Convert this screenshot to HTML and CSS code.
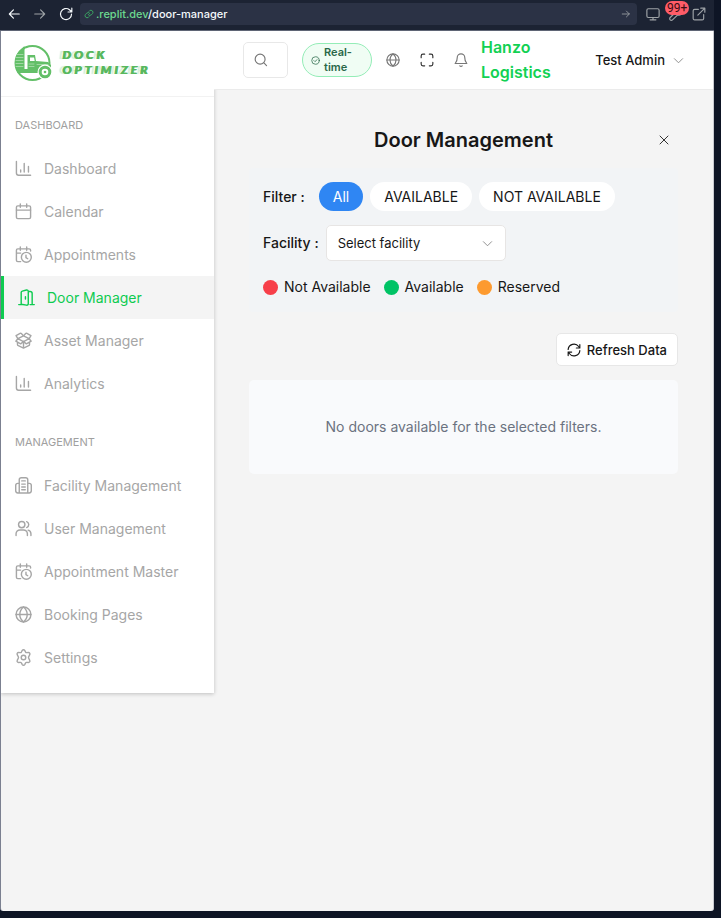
FILE: index.html
```html
<!DOCTYPE html>
<html lang="en">
<head>
<meta charset="utf-8">
<meta name="viewport" content="width=device-width, initial-scale=1">
<title>Door Manager</title>
<link rel="stylesheet" href="styles.css">
</head>
<body>
<svg class="defs" aria-hidden="true">
  <symbol id="bars" viewBox="0 0 24 24"><path d="M2 2v16.500a3 3 0 0 0 3 3h17M8 17v-3M13 17V5M19 17V9"/></symbol>
  <symbol id="calendar" viewBox="0 0 24 24"><rect x="2" y="4" width="20" height="18" rx="2"/><path d="M7.500 1.500V6M16.500 1.500V6M2 10h20"/></symbol>
  <symbol id="cal-clock" viewBox="0 0 24 24"><path d="M22 7V6a2 2 0 0 0-2-2H4a2 2 0 0 0-2 2v14a2 2 0 0 0 2 2h4M7.500 1.500V6M16.500 1.500V6M2 10h6"/><circle cx="16" cy="16" r="7"/><path d="M15.500 13v3.500l2.500 1.500"/></symbol>
  <symbol id="door" viewBox="0 0 24 24"><path d="M1 22h6M17 22h6M4.500 22V5a2 2 0 0 1 1.500-2l6-1.600a2 2 0 0 1 2.500 2V21a2 2 0 0 1-2.500 1.800L4.500 21.500M14.500 3.500H17a3 3 0 0 1 3 3V22M10.500 11v3"/></symbol>
  <symbol id="box" viewBox="0 0 24 24"><path d="M12 5.500 4 9.500l8 4 8-4-8-4ZM12 5.500 9 2.200a1.500 1.500 0 0 0-1.800-.3L1.500 5 4 9.500M12 5.500l3-3.300a1.500 1.500 0 0 1 1.800-.3L22.500 5 20 9.500M4 9.500 1.200 13l6.800 3.700 4-3.200 4 3.200 6.800-3.700L20 9.500M3.500 14.500v3a2 2 0 0 0 1.200 1.800L12 22.800l7.300-3.500a2 2 0 0 0 1.200-1.800v-3M12 13.500v9"/></symbol>
  <symbol id="building" viewBox="0 0 24 24"><path d="M6 22.500V4a3 3 0 0 1 3-3h6a3 3 0 0 1 3 3v18.500M6 9H4a3 3 0 0 0-3 3v7.500a3 3 0 0 0 3 3h16a3 3 0 0 0 3-3V12a3 3 0 0 0-3-3h-2M9.500 5.500h5M9.500 10h5M9.500 14h5M9.500 18h5"/></symbol>
  <symbol id="users" viewBox="0 0 24 24"><circle cx="9.500" cy="6.500" r="4.500"/><path d="M1.500 22v-2.500A5.500 5.500 0 0 1 7 14h5a5.500 5.500 0 0 1 5.500 5.500V22M16.500 2.300a4.500 4.500 0 0 1 0 8.400M18.500 14.300a5.500 5.500 0 0 1 4 5.200V22"/></symbol>
  <symbol id="globe" viewBox="0 0 24 24"><circle cx="12" cy="12" r="10.500"/><path d="M1.500 12h21M12 1.500c-7 6-7 15 0 21M12 1.500c7 6 7 15 0 21"/></symbol>
  <symbol id="gear" viewBox="0 0 24 24"><path d="M9.500 3.200 10.300 2a2 2 0 0 1 3.400 0l1.300 2.300a1.500 1.500 0 0 0 1.400.8l2.700-.1a2 2 0 0 1 1.700 3l-1.400 2.900a2 2 0 0 0 0 2.200l1.400 2.900a2 2 0 0 1-1.700 3l-2.700-.1a1.500 1.500 0 0 0-1.400.8L13.700 22a2 2 0 0 1-3.400 0L9 19.700a1.500 1.500 0 0 0-1.400-.8l-2.700.1a2 2 0 0 1-1.700-3l1.400-2.900a2 2 0 0 0 0-2.200L3.200 8a2 2 0 0 1 1.700-3l2.700.1A1.500 1.500 0 0 0 9 4.300Z"/><circle cx="12" cy="12" r="3.200"/></symbol>
  <symbol id="search" viewBox="0 0 24 24"><circle cx="10.500" cy="10.500" r="8.500"/><path d="m17 17 4.500 4.500"/></symbol>
  <symbol id="check" viewBox="0 0 24 24"><circle cx="12" cy="12" r="10"/><path d="m7.500 12 3 3 6-5.500"/></symbol>
  <symbol id="expand" viewBox="0 0 24 24"><path d="M8 2H5a3 3 0 0 0-3 3v3M22 8V5a3 3 0 0 0-3-3h-3M2 16v3a3 3 0 0 0 3 3h3M16 22h3a3 3 0 0 0 3-3v-3"/></symbol>
  <symbol id="bell" viewBox="0 0 24 24"><path d="M5.500 8a6.500 6.500 0 0 1 13 0c0 7 3 8 3.500 10H2c.5-2 3.500-3 3.500-10M10 22a2.500 2.500 0 0 0 4 0"/></symbol>
  <symbol id="chevron" viewBox="0 0 24 24"><path d="m3 8 9 9 9-9"/></symbol>
  <symbol id="close" viewBox="0 0 24 24"><path d="m4 4 16 16M20 4 4 20"/></symbol>
  <symbol id="refresh" viewBox="0 0 24 24"><path d="M2 11a10 10 0 0 1 18-5l2 2.500M22 2.500v6h-6M22 13a10 10 0 0 1-18 5l-2-2.500M2 21.500v-6h6"/></symbol>
  <symbol id="arrow-left" viewBox="0 0 24 24"><path d="M21 12H4M11 5l-7 7 7 7"/></symbol>
  <symbol id="arrow-right" viewBox="0 0 24 24"><path d="M3 12h17M13 5l7 7-7 7"/></symbol>
  <symbol id="reload" viewBox="0 0 24 24"><path d="M21.500 12A9.500 9.500 0 1 1 18 4.800L22 8.500M22 2v6.500h-6.500"/></symbol>
  <symbol id="link" viewBox="0 0 24 24"><path d="M10 13.500a5 5 0 0 0 7.500.5l3-3a5 5 0 0 0-7-7L12 5.500M14 10.500a5 5 0 0 0-7.500-.5l-3 3a5 5 0 0 0 7 7l1.500-1.500"/></symbol>
  <symbol id="monitor" viewBox="0 0 24 24"><rect x="1.500" y="3" width="21" height="15" rx="2.500"/><path d="M12 18v4M7 22h10"/></symbol>
  <symbol id="wrench" viewBox="0 0 24 24"><path d="M14.500 6.500a5 5 0 0 1 6-4L17.500 6l1 3 3 .5L23 7a6 6 0 0 1-8 6.500L6 22a2.500 2.500 0 0 1-4-4l9-8.500a6 6 0 0 1 3.500-3"/></symbol>
  <symbol id="external" viewBox="0 0 24 24"><path d="M11 4H4.500A2.500 2.500 0 0 0 2 6.500v13A2.500 2.500 0 0 0 4.500 22h13a2.500 2.500 0 0 0 2.500-2.500V13M15 2h7v7M22 2 10 14"/></symbol>
</svg>

<div class="browser">
  <div class="toolbar">
    <button class="tool" aria-label="Back"><svg><use href="#arrow-left"/></svg></button>
    <button class="tool dim" aria-label="Forward"><svg><use href="#arrow-right"/></svg></button>
    <button class="tool" aria-label="Reload"><svg><use href="#reload"/></svg></button>
    <div class="address">
      <svg class="link-icon"><use href="#link"/></svg>
      <span class="url"><span class="host">.replit.dev</span>/door-manager</span>
      <button class="go" aria-label="Go"><svg><use href="#arrow-right"/></svg></button>
    </div>
    <div class="tools">
      <button class="tool dim" aria-label="Devices"><svg><use href="#monitor"/></svg></button>
      <button class="tool dim" aria-label="Developer tools"><svg><use href="#wrench"/></svg><span class="count">99+</span></button>
      <button class="tool dim" aria-label="Open in new tab"><svg><use href="#external"/></svg></button>
    </div>
  </div>

  <div class="app">
    <aside class="sidebar">
      <a class="logo" href="#">
        <svg class="logo-mark" viewBox="0 0 38 38" aria-hidden="true">
          <circle cx="18.500" cy="18" r="17" fill="none" stroke="#63bf68" stroke-width="2"/>
          <path d="M2 11 5 6l5.500-5v27H4L1 21Z" fill="#63bf68"/>
          <path d="M3 9.500h6M2 12.500h7M2 15.500h7M2 18.500h7M2 21.500h7" stroke="#b9e2bb" stroke-width=".7"/>
          <path d="M11.700 4v20" stroke="#fff" stroke-width="1"/>
          <path d="M13.500 10h7.500l1 6 12 1 3 3v5H26l-2 3H4l-2-4h11.500Z" fill="#63bf68"/>
          <path d="M16 12.500h4l.7 3.500H16Z" fill="#fff"/>
          <path d="M15 19h5M15 21.500h5M23 19.500h11" stroke="#b9e2bb" stroke-width=".7"/>
          <circle cx="31" cy="27" r="7.500" fill="#fff"/>
          <circle cx="31" cy="27" r="4.800" fill="none" stroke="#63bf68" stroke-width="3"/>
          <circle cx="31" cy="27" r="1.300" fill="#63bf68"/>
        </svg>
        <span class="logo-text"><span>DOCK</span><span>OPTIMIZER</span></span>
      </a>
      <nav class="nav" aria-label="Main">
        <h2>DASHBOARD</h2>
        <a href="#"><svg><use href="#bars"/></svg>Dashboard</a>
        <a href="#"><svg><use href="#calendar"/></svg>Calendar</a>
        <a href="#"><svg><use href="#cal-clock"/></svg>Appointments</a>
        <a href="#" class="active" aria-current="page"><svg><use href="#door"/></svg>Door Manager</a>
        <a href="#"><svg><use href="#box"/></svg>Asset Manager</a>
        <a href="#"><svg><use href="#bars"/></svg>Analytics</a>
        <h2>MANAGEMENT</h2>
        <a href="#"><svg><use href="#building"/></svg>Facility Management</a>
        <a href="#"><svg><use href="#users"/></svg>User Management</a>
        <a href="#"><svg><use href="#cal-clock"/></svg>Appointment Master</a>
        <a href="#"><svg><use href="#globe"/></svg>Booking Pages</a>
        <a href="#"><svg><use href="#gear"/></svg>Settings</a>
      </nav>
    </aside>

    <div class="content">
      <header class="header">
        <label class="search"><svg><use href="#search"/></svg><input type="search" aria-label="Search"></label>
        <span class="status"><svg><use href="#check"/></svg><span>Real-<br>time</span></span>
        <div class="actions">
          <button aria-label="Language"><svg><use href="#globe"/></svg></button>
          <button class="dark" aria-label="Full screen"><svg><use href="#expand"/></svg></button>
          <button aria-label="Notifications"><svg><use href="#bell"/></svg></button>
        </div>
        <span class="org">Hanzo Logistics</span>
        <button class="account">Test Admin<svg><use href="#chevron"/></svg></button>
      </header>

      <main class="main">
        <div class="title">
          <h1>Door Management</h1>
          <button class="close" aria-label="Close"><svg><use href="#close"/></svg></button>
        </div>
        <section class="filters">
          <div class="row" role="group" aria-labelledby="filter-label">
            <span class="field-label" id="filter-label">Filter :</span>
            <div class="pills">
              <button class="pill selected" aria-pressed="true">All</button>
              <button class="pill" aria-pressed="false">AVAILABLE</button>
              <button class="pill" aria-pressed="false">NOT AVAILABLE</button>
            </div>
          </div>
          <div class="row facility">
            <label class="field-label" for="facility">Facility :</label>
            <span class="select"><select id="facility"><option>Select facility</option></select><svg><use href="#chevron"/></svg></span>
          </div>
          <ul class="legend">
            <li><i class="dot red"></i>Not Available</li>
            <li><i class="dot green"></i>Available</li>
            <li><i class="dot orange"></i>Reserved</li>
          </ul>
        </section>
        <button class="refresh"><svg><use href="#refresh"/></svg>Refresh Data</button>
        <p class="empty">No doors available for the selected filters.</p>
      </main>
    </div>
  </div>
</div>
</body>
</html>
```
FILE: styles.css
```css
* { box-sizing: border-box; }
body { margin: 0; background: #0e1525; color: #171717; font: 14px/20px Inter, "Liberation Sans", sans-serif; }
.defs { position: absolute; width: 0; height: 0; }
svg { display: block; flex: none; width: 14px; height: 14px; fill: none; stroke: currentColor; stroke-width: 2; stroke-linecap: round; stroke-linejoin: round; }
button, input, select { font: inherit; color: inherit; }
button { padding: 0; border: 0; background: none; cursor: pointer; }
a { color: inherit; text-decoration: none; }

.browser { display: flex; flex-direction: column; min-height: 100vh; padding: 0 7px 7px 0; }

.toolbar { display: flex; align-items: center; gap: 12px; height: 31px; padding: 0 8px 3px 7px; background: #1c2333; border-bottom: 1px solid #5f6575; color: #f5f9fc; }
.tool { position: relative; }
.tool svg { width: 14px; height: 14px; }
.tools { display: flex; gap: 9px; }
.dim, .go { color: #9da2a6; }
.address { display: flex; flex: 1; align-items: center; gap: 2px; height: 22px; margin: 0 -3px 0 -5px; padding: 0 6px 0 4px; border-radius: 4px; background: #2b3245; }
.address svg { width: 10px; height: 10px; }
.link-icon { color: #3fb868; }
.url { flex: 1; font: 500 11px/16px Inter, sans-serif; }
.host { color: #6cd98f; }
.count { position: absolute; top: -6px; left: -4px; height: 14px; padding: 0 2px; border-radius: 7px; background: #ff5c68; color: #3a0c12; font: 12px/14px Roboto, sans-serif; }

.app { display: flex; flex: 1; align-items: flex-start; border-left: 1px solid #7b8090; border-right: 1px solid #c8cad0; border-radius: 0 0 3px 3px; background: #f4f4f4; overflow: hidden; }

.sidebar { flex: none; width: 213px; padding-bottom: 14px; background: #fff; box-shadow: 0 1px 4px rgb(0 0 0 / 22%); }
.logo { display: flex; align-items: center; gap: 10px; height: 66px; padding: 0 13px; border-bottom: 1px solid #f2f2f2; }
.logo-mark { width: 38px; height: 38px; stroke: none; }
.logo-text { display: flex; flex-direction: column; padding-bottom: 3px; color: #58b85e; font: italic 900 12px/15px Lato, sans-serif; letter-spacing: 3px; text-shadow: 1px 0 0 #58b85e, -3px 0 1px #d5eed7; }
.nav h2 { margin: 20px 0 14px; padding: 0 14px; color: #a0a0a0; font-size: 11px; font-weight: 400; line-height: 16px; }
.nav h2:not(:first-child) { margin-top: 29px; }
.nav a { display: flex; align-items: center; gap: 12px; height: 43px; padding: 0 14px; color: #a6a6a6; }
.nav svg { width: 17px; height: 17px; }
.nav .active { border-left: 3px solid #0ecb50; background: #f4f4f4; color: #0ecb50; }

.content { flex: 1; min-width: 0; }
.header { display: flex; align-items: center; height: 59px; padding: 0 29px; border-bottom: 1px solid #ebebeb; background: #fff; }
.search { display: flex; align-items: center; width: 45px; height: 36px; padding: 0 10px; border: 1px solid #e8e8e8; border-radius: 5px; color: #777; }
.search input { width: 0; min-width: 0; flex: 1; padding: 0; border: 0; outline: 0; background: none; appearance: none; }
.status { display: flex; align-items: center; gap: 4px; width: 70px; height: 34px; margin: 0 14px; padding: 0 8px; border: 1px solid #94edb7; border-radius: 17px; background: #f0fdf4; color: #2a6848; font-size: 11px; font-weight: 600; line-height: 15px; }
.status svg { width: 9px; height: 9px; }
.actions { display: flex; gap: 20px; color: #777; }
.dark { color: #333; }
.org { flex: 0 1 76px; margin-left: 13px; color: #12d153; font-size: 16px; font-weight: 600; line-height: 25px; }
.account { display: flex; align-items: center; gap: 8px; margin-left: auto; font-size: 13px; font-weight: 500; white-space: nowrap; }
.account svg, .select svg { width: 11px; height: 11px; color: #888; }

.main { display: flex; flex-direction: column; padding: 35px; }
.title { display: grid; grid-template-columns: 1fr auto 1fr; align-items: center; height: 29px; }
.title h1 { grid-column: 2; margin: 0; font-size: 20px; font-weight: 600; line-height: 28px; }
.close { justify-self: end; padding: 8px; color: #333; }
.close svg { width: 12px; height: 12px; }
.filters { margin-top: 14px; padding: 14px; border-radius: 4px; background: #f2f4f6; }
.row { display: flex; align-items: center; gap: 14px; }
.field-label { font-weight: 500; }
.pills { display: flex; gap: 7px; }
.pill { height: 29px; padding: 0 14px; border-radius: 15px; background: #fff; white-space: nowrap; }
.pill.selected { background: #2f86f3; color: #fff; }
.facility { gap: 7px; margin-top: 14px; }
.select { position: relative; flex: 0 1 180px; }
.select select { width: 100%; height: 36px; padding: 0 30px 0 11px; border: 1px solid #e7e5e4; border-radius: 5px; background: #fff; font-size: 13px; appearance: none; }
.select svg { position: absolute; top: 13px; right: 13px; pointer-events: none; }
.legend { display: flex; gap: 13px; margin: 15px 0 0; padding: 0; list-style: none; line-height: 22px; }
.legend li { display: flex; align-items: center; gap: 6px; white-space: nowrap; }
.dot { width: 15px; height: 15px; border-radius: 50%; }
.red { background: #f73f49; }
.green { background: #00c365; }
.orange { background: #fd9a2f; }
.refresh { display: flex; align-items: center; align-self: flex-end; gap: 6px; height: 33px; margin-top: 21px; padding: 0 10px; border: 1px solid #e7e7e7; border-radius: 5px; background: #fff; font-size: 13px; font-weight: 500; }
.empty { margin: 14px 0 0; padding: 37px 14px; border-radius: 5px; background: #f9fafc; color: #6b7280; text-align: center; }
```
